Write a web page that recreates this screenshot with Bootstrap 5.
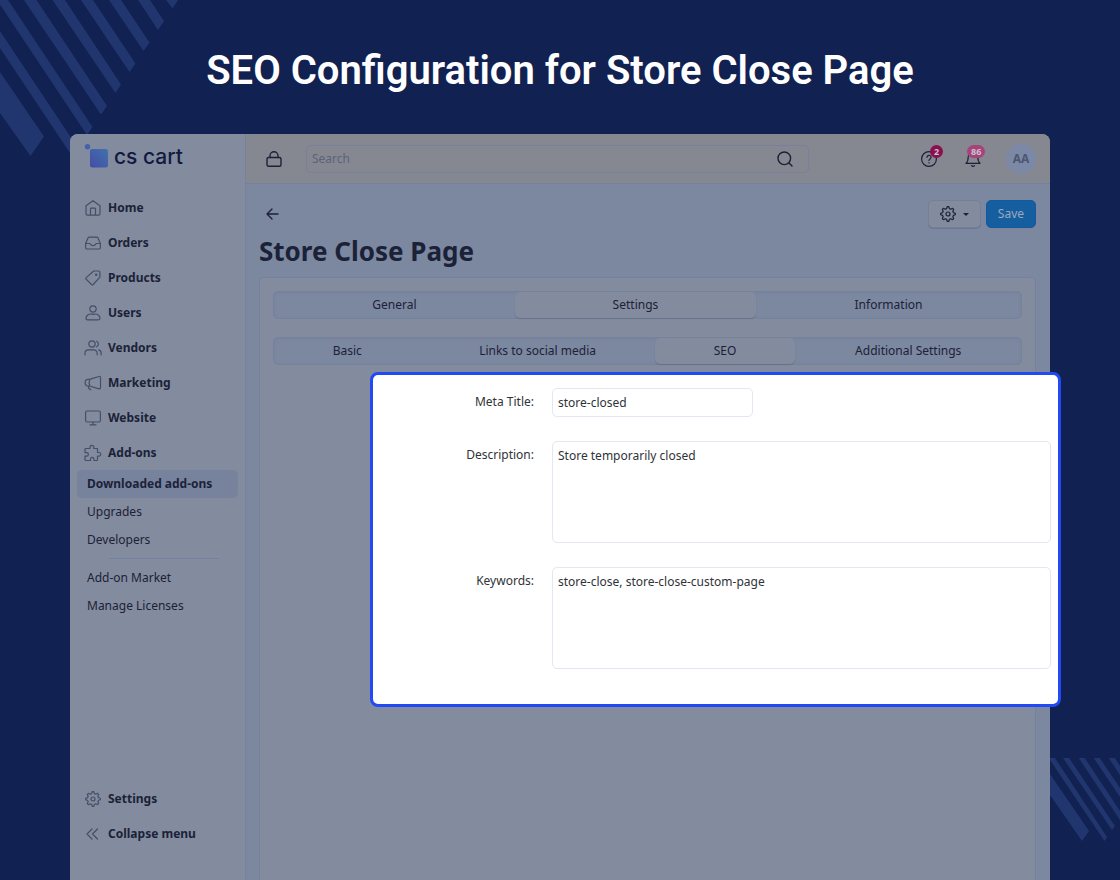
<!DOCTYPE html>
<html lang="en">
<head>
<meta charset="utf-8">
<meta name="viewport" content="width=device-width, initial-scale=1">
<title>SEO Configuration for Store Close Page</title>
<link href="https://cdn.jsdelivr.net/npm/bootstrap@5.3.0/dist/css/bootstrap.min.css" rel="stylesheet">
<style>
  :root {
    --navy: #112151;
    --stripe: #21366f;
    --surface: #838b9e;
    --canvas: #7c87a0;
    --line: #76819b;
    --ink: #1b2238;
  }
  body {
    background: var(--navy);
    color: var(--ink);
    font-family: "Noto Sans", "Open Sans", sans-serif;
    font-size: 13px;
    line-height: 20px;
  }
  svg { flex: none; }
  .ico { width: 16px; height: 16px; fill: none; stroke: currentColor; stroke-width: 1.2; stroke-linecap: round; stroke-linejoin: round; }
  .ico-bold { stroke-width: 1.4; }
  .hero { font-family: Roboto, sans-serif; font-weight: 600; font-size: 40px; line-height: 48px; padding: 47px 0 39px; color: #fff; }
  .stripes { fill: var(--stripe); z-index: -1; }
  .stripes-low { bottom: 38px; }
  .app { margin: 0 70px; min-height: calc(100vh - 134px); background: var(--canvas); border-radius: 8px 8px 0 0; }
  .side { width: 176px; background: var(--surface); border-right: 1px solid var(--line); border-radius: 8px 0 0 0; padding: 10px 7px 29px; }
  .brand-row { height: 28px; padding-left: 7px; margin-bottom: 18px; }
  .brand-word { font-family: Inter, sans-serif; font-weight: 500; font-size: 21px; line-height: 25px; color: #111a40; }
  .side a { color: var(--ink); text-decoration: none; }
  .side-link { height: 35px; padding-left: 8px; gap: 7px; font-weight: 700; font-size: 12px; }
  .side-link svg { color: #464e68; }
  .sub-link { height: 28px; padding-left: 10px; border-radius: 5px; font-size: 12px; }
  .sub-link.current { background: #77829d; font-weight: 700; }
  .side hr { margin: 4px 19px 5px 32px; color: #7482a2; opacity: 1; }
  .topbar { height: 50px; background: #868891; border-bottom: 1px solid var(--line); border-radius: 0 8px 0 0; padding: 0 14px 0 20px; }
  .plain, .back { border: 0; background: none; padding: 0; color: var(--ink); }
  .find { width: 503px; height: 28px; margin-left: 24px; border: 1px solid #78819b; border-radius: 5px; padding: 0 15px 0 5px; }
  .find input { border: 0; background: none; outline: 0; font-size: 12px; color: var(--ink); padding: 0; }
  .find input::placeholder { color: #5c6278; opacity: 1; }
  .status { gap: 28px; }
  .count { position: absolute; left: 9px; top: -6px; height: 13px; min-width: 13px; border-radius: 7px; padding: 0 3px; font-size: 9px; line-height: 13px; font-weight: 700; color: #c3c5cf; background: #8c0f50; }
  .count.pink { left: 2px; padding: 0 4px; background: #a8427b; }
  .who { width: 30px; height: 30px; margin-left: -3px; border: 0; padding: 0; border-radius: 50%; background: #7c89a6; color: #4c566f; font-size: 12px; font-weight: 700; }
  .work { padding: 16px 14px 0 13px; }
  .back { padding-left: 5px; }
  .tools { gap: 5px; }
  .tool-btn { height: 28px; border-radius: 5px; font-size: 12px; padding: 0 11px; line-height: 26px; }
  .tool-gear { background: var(--surface); border: 1px solid #767f98; color: var(--ink); box-shadow: 0 1px 0 #6b7692; }
  .tool-save { background: #155e9f; border: 1px solid #15599a; color: #9fa9bd; }
  .page-name { font-size: 26px; line-height: 36px; font-weight: 700; margin: 5px 0 8px; }
  .panel { background: var(--surface); border: 1px solid var(--line); border-bottom: 0; border-radius: 5px 5px 0 0; padding: 13px 13px 0; }
  .seg { height: 28px; margin-bottom: 18px; border-radius: 5px; border: 1px solid var(--line); background: var(--canvas); box-shadow: inset 0 1px 3px #717c9566; }
  .seg .nav-link { padding: 0; color: var(--ink); font-size: 12px; line-height: 26px; border-radius: 5px; }
  .seg .nav-link.active { background: var(--surface); box-shadow: 0 1px 1px 0 #66718d; }
  .seg li { flex: 1 1 0; text-align: center; }
  .seg .w-info { flex-grow: 1.1; }
  .seg .w-basic { flex-grow: 1.04; }
  .seg .w-links { flex-grow: 1.66; }
  .seg .w-more { flex-grow: 1.6; }
  .focus-box { background: #fff; border: 3px solid #2149f5; border-radius: 8px; margin: -11px -39px 0 97px; padding: 13px 7px 35px 8px; color: #2f3338; }
  .focus-box .d-flex { gap: 18px; }
  .focus-box label { width: 153px; text-align: right; padding-top: 4px; font-size: 12px; }
  .field { border: 1px solid #e2e7f1; border-radius: 5px; padding: 4px 5px; font-size: 12px; line-height: 20px; color: #2f3338; resize: none; outline: 0; }
  .field-short { width: 201px; height: 29px; }
  .field-tall { height: 102px; }
</style>
</head>
<body class="position-relative overflow-x-hidden">
<svg class="stripes position-absolute top-0 start-0" width="180" height="160" viewBox="0 0 180 160" aria-hidden="true">
  <path d="M166 0h12l-5.500 8.500zM138 0h12l14 21-6 9zM109 0h12l28.500 42.500-6 8.500zM81 0h12l42.500 63.500-6 8.500zM52.500 0H65l56 84.500-5.500 8.500zM24 0h12.500L107 106l-6 8.500zM0 0h8l84.500 127-5.500 8L0 4.500zM0 31l78 117-6 8L0 48zM0 72l44 64.500L30.500 156 0 113z"/>
</svg>
<svg class="stripes stripes-low position-absolute end-0" width="70" height="84" viewBox="0 0 70 84" aria-hidden="true">
  <path d="M0 16l39 57-7 10L0 37zM0 0h5l52 79-2.500 4L0 2zM13 0h6l46 68-3 4zM28.700 0h6L70 53v9zM43.700 0h6L70 30v9zM58.700 0h6L70 8v9z"/>
</svg>

<h1 class="hero text-center m-0">SEO Configuration for Store Close Page</h1>

<div class="app d-flex">
  <aside class="side d-flex flex-column flex-shrink-0">
    <a href="#" class="brand-row d-flex align-items-start gap-1">
      <svg width="26" height="25" viewBox="0 0 26 25" aria-hidden="true">
        <defs><linearGradient id="tile" x1="0" y1="1" x2="1" y2="0"><stop offset="0" stop-color="#434da6"/><stop offset="1" stop-color="#4172ad"/></linearGradient></defs>
        <circle cx="3.500" cy="2.800" r="2.700" fill="#4561a8"/><rect x="6" y="5" width="18" height="18.500" rx="2.200" fill="url(#tile)"/>
      </svg>
      <span class="brand-word">cs cart</span>
    </a>
    <nav class="d-flex flex-column flex-grow-1">
      <a href="#" class="side-link d-flex align-items-center"><svg class="ico" viewBox="0 0 16 16"><path d="M1 5.800 8 .700l7 5.100v7.700a1.600 1.600 0 0 1-1.600 1.600H2.600A1.600 1.600 0 0 1 1 13.500zM5.500 15V9a.8.8 0 0 1 .8-.8h3.400a.8.8 0 0 1 .8.800v6"/></svg>Home</a>
      <a href="#" class="side-link d-flex align-items-center"><svg class="ico" viewBox="0 0 16 16"><path d="M.6 8.500 3 3a1.500 1.500 0 0 1 1.400-.9h7.200A1.500 1.500 0 0 1 13 3l2.400 5.500v4a1.500 1.500 0 0 1-1.500 1.500H2.100A1.500 1.500 0 0 1 .6 12.500zh3.900c.5 0 .8.300 1 .8.300.9 1 1.400 2.500 1.400s2.200-.5 2.500-1.400c.2-.5.5-.8 1-.8h3.900"/></svg>Orders</a>
      <a href="#" class="side-link d-flex align-items-center"><svg class="ico" viewBox="0 0 16 16"><path d="M8.700 1h5a1.200 1.200 0 0 1 1.200 1.200v5L8.200 14.500a1.200 1.200 0 0 1-1.700 0L1.200 9.300a1.200 1.200 0 0 1 0-1.700z"/><circle cx="11.200" cy="4.800" r=".7"/></svg>Products</a>
      <a href="#" class="side-link d-flex align-items-center"><svg class="ico" viewBox="0 0 16 16"><circle cx="8" cy="4" r="3.200"/><path d="M1 13.300c0-2.600 2.400-4.300 4.600-4.300.8 0 1.400.4 2.400.4s1.600-.4 2.400-.4c2.200 0 4.600 1.700 4.600 4.300 0 1-.6 1.500-1.500 1.500h-11C1.600 14.800 1 14.300 1 13.300z"/></svg>Users</a>
      <a href="#" class="side-link d-flex align-items-center"><svg class="ico overflow-visible" viewBox="0 0 16 16"><circle cx="7" cy="4" r="3.200"/><path d="M0 14.800v-1.500A3.500 3.500 0 0 1 3.500 9.800h5.200a3.500 3.500 0 0 1 3.500 3.500v1.500M11.500 1.200a3 3 0 0 1 0 5.600M13.700 9.900a3.200 3.200 0 0 1 2.400 3.200v1.700"/></svg>Vendors</a>
      <a href="#" class="side-link d-flex align-items-center"><svg class="ico overflow-visible" viewBox="0 0 16 16"><path d="M14 1.500 4.500 4.300H3C1.300 4.300.1 5.600.1 7.600S1.300 11 3 11h1.500l9.500 2.800c.9.200 1.500-.2 1.500-1V2.500c0-.8-.6-1.200-1.500-1zM4.800 4.300c-.8 2-.8 4.600 0 6.700M3.300 11.200c.1 1.800.8 3.200 2.500 3.500"/></svg>Marketing</a>
      <a href="#" class="side-link d-flex align-items-center"><svg class="ico" viewBox="0 0 16 16"><rect x=".6" y="1" width="14.800" height="11" rx="1.500"/><path d="M8 12v2.800M5 14.800h6"/></svg>Website</a>
      <a href="#" class="side-link d-flex align-items-center"><svg class="ico overflow-visible" viewBox="0 0 16 16"><path d="M1 3.500h4V2.200a1.900 1.900 0 0 1 3.800 0v1.300h3.700v4h1.400a1.800 1.800 0 0 1 0 3.600h-1.400v3.400a1 1 0 0 1-1 1H9v-1.300a1.700 1.700 0 0 0-3.500 0v1.300H1a1 1 0 0 1-1-1v-3.400h1.700a1.700 1.700 0 0 0 0-3.400H0V4.500a1 1 0 0 1 1-1z"/></svg>Add-ons</a>
      <a href="#" class="sub-link current d-flex align-items-center" aria-current="page">Downloaded add-ons</a>
      <a href="#" class="sub-link d-flex align-items-center">Upgrades</a>
      <a href="#" class="sub-link d-flex align-items-center">Developers</a>
      <hr>
      <a href="#" class="sub-link d-flex align-items-center">Add-on Market</a>
      <a href="#" class="sub-link d-flex align-items-center">Manage Licenses</a>
      <a href="#" class="side-link d-flex align-items-center mt-auto"><svg class="ico" viewBox="0 0 16 16"><use href="#gear"/></svg>Settings</a>
      <a href="#" class="side-link d-flex align-items-center"><svg class="ico" viewBox="0 0 16 16"><path d="M7 3 2 8l5 5M12.500 3l-5 5 5 5"/></svg>Collapse menu</a>
    </nav>
  </aside>

  <div class="flex-grow-1 d-flex flex-column">
    <header class="topbar d-flex align-items-center">
      <button type="button" class="plain d-flex" aria-label="Lock"><svg class="ico ico-bold" viewBox="0 0 16 16"><rect x="1" y="6.500" width="14" height="8.700" rx="1.500"/><path d="M4 6.500V4.700a4 4 0 0 1 8 0v1.800"/></svg></button>
      <form class="find d-flex align-items-center" role="search">
        <input class="flex-grow-1" type="search" placeholder="Search" aria-label="Search">
        <button type="submit" class="plain d-flex" aria-label="Find"><svg class="ico ico-bold" viewBox="0 0 16 16"><circle cx="7.300" cy="7.300" r="6.300"/><path d="m12 12 3 3"/></svg></button>
      </form>
      <div class="status ms-auto d-flex align-items-center">
        <button type="button" class="plain position-relative d-flex" aria-label="Help"><svg class="ico" viewBox="0 0 16 16"><circle cx="8" cy="8" r="7.400"/><path d="M6 6.300a2 2 0 1 1 3 1.700c-.7.400-1 .8-1 1.500M8 11.700v.2"/></svg><span class="count">2</span></button>
        <button type="button" class="plain position-relative d-flex" aria-label="Notifications"><svg class="ico" viewBox="0 0 16 16"><path d="M1 12.300c1.600-1.300 2.200-2.600 2.200-6.300a4.800 4.800 0 0 1 9.600 0c0 3.700.6 5 2.200 6.300zM6.500 14.600c.8.900 2.200.9 3 0"/></svg><span class="count pink">86</span></button>
        <button type="button" class="who d-flex align-items-center justify-content-center">AA</button>
      </div>
    </header>

    <main class="work d-flex flex-column flex-grow-1">
      <div class="tools d-flex align-items-center">
        <button type="button" class="back d-flex me-auto" aria-label="Back"><svg class="ico ico-bold" viewBox="0 0 16 16"><path d="M3 8h11M8 3 3 8l5 5"/></svg></button>
        <button type="button" class="btn tool-btn tool-gear dropdown-toggle d-flex align-items-center gap-1" aria-label="Tools"><svg class="ico" viewBox="0 0 16 16"><g id="gear"><path d="M6.600 2.600 7.200.7h1.600l.6 1.900 1.400.6 1.800-.9 1.100 1.100-.9 1.800.6 1.400 1.900.6v1.600l-1.900.6-.6 1.400.9 1.800-1.100 1.100-1.800-.9-1.400.6-.6 1.900H7.200l-.6-1.900-1.400-.6-1.800.9-1.100-1.100.9-1.800-.6-1.400-1.900-.6V7.200l1.900-.6.600-1.400-.9-1.800 1.100-1.100 1.800.9z"/><circle cx="8" cy="8" r="2"/></g></svg></button>
        <button type="button" class="btn tool-btn tool-save">Save</button>
      </div>
      <h2 class="page-name">Store Close Page</h2>

      <section class="panel flex-grow-1">
        <ul class="nav seg flex-nowrap">
          <li><a class="nav-link" href="#">General</a></li>
          <li><a class="nav-link active" href="#">Settings</a></li>
          <li class="w-info"><a class="nav-link" href="#">Information</a></li>
        </ul>
        <ul class="nav seg flex-nowrap">
          <li class="w-basic"><a class="nav-link" href="#">Basic</a></li>
          <li class="w-links"><a class="nav-link" href="#">Links to social media</a></li>
          <li><a class="nav-link active" href="#">SEO</a></li>
          <li class="w-more"><a class="nav-link" href="#">Additional Settings</a></li>
        </ul>

        <form class="focus-box position-relative d-flex flex-column gap-4">
          <div class="d-flex">
            <label for="meta-title">Meta Title:</label>
            <input id="meta-title" class="field field-short" type="text" value="store-closed">
          </div>
          <div class="d-flex">
            <label for="meta-desc">Description:</label>
            <textarea id="meta-desc" class="field field-tall flex-grow-1">Store temporarily closed</textarea>
          </div>
          <div class="d-flex">
            <label for="meta-keys">Keywords:</label>
            <textarea id="meta-keys" class="field field-tall flex-grow-1">store-close, store-close-custom-page</textarea>
          </div>
        </form>
      </section>
    </main>
  </div>
</div>
<script src="https://cdn.jsdelivr.net/npm/bootstrap@5.3.0/dist/js/bootstrap.bundle.min.js"></script>
</body>
</html>
